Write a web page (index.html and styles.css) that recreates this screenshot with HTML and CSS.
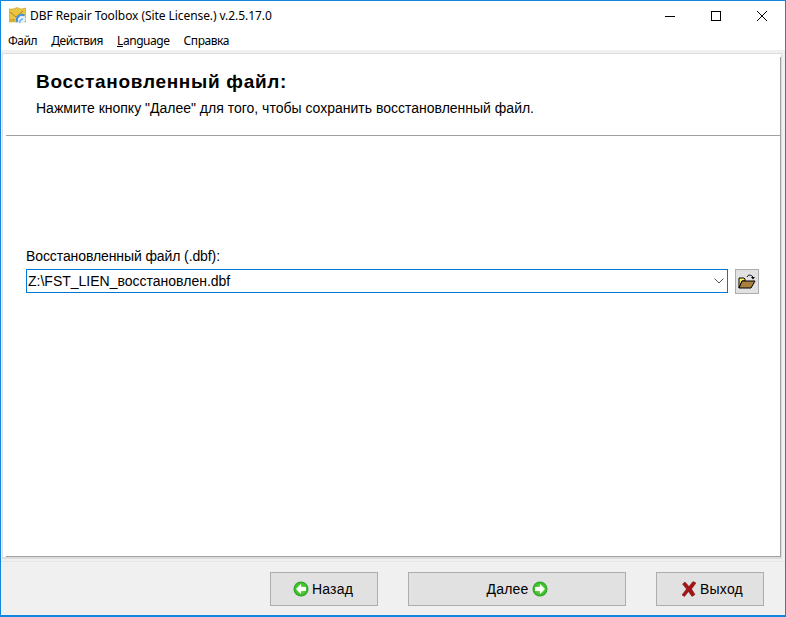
FILE: index.html
```html
<!DOCTYPE html>
<html lang="ru">
<head>
  <meta charset="UTF-8">
  <meta name="viewport" content="width=device-width, initial-scale=1.0">
  <title>DBF Repair Toolbox</title>
  <link rel="stylesheet" href="styles.css">
</head>
<body>
  <div class="window">
    <div class="titlebar">
      <svg class="app-icon" width="17" height="17" viewBox="0 0 17 17">
        <path d="M0 2 L4 2 L8 0.5 L12 2 L17 1 V15 H0 Z" fill="#eac63f" stroke="#b8902a" stroke-width="0.5"/>
        <path d="M1 5 L7 10 L14 4" fill="none" stroke="#a8842c" stroke-width="1"/>
        <path d="M1 13 H6" stroke="#b8902a" stroke-width="1"/>
        <circle cx="12" cy="12" r="4.5" fill="#e6f2fd"/>
        <path d="M8.5 15 A5 5 0 0 1 15.5 8.5" fill="none" stroke="#3c8ee8" stroke-width="2"/>
        <path d="M11 16 A3 3 0 0 1 14 12" fill="none" stroke="#6ab0f0" stroke-width="1.5"/>
      </svg>
      <span class="app-title">DBF Repair Toolbox (Site License.) v.2.5.17.0</span>
      <div class="window-controls">
        <svg class="ctl" width="46" height="29" viewBox="0 0 46 29"><path d="M18 15.5 H28" stroke="#000" stroke-width="1"/></svg>
        <svg class="ctl" width="46" height="29" viewBox="0 0 46 29"><rect x="18.5" y="10.5" width="9" height="9" fill="none" stroke="#000" stroke-width="1"/></svg>
        <svg class="ctl" width="46" height="29" viewBox="0 0 46 29"><path d="M18 10 L28 20 M28 10 L18 20" stroke="#000" stroke-width="1"/></svg>
      </div>
    </div>

    <div class="menubar">
      <span class="menu-item">Файл</span>
      <span class="menu-item">Действия</span>
      <span class="menu-item"><u>L</u>anguage</span>
      <span class="menu-item">Справка</span>
    </div>

    <div class="panel">
      <div class="panel-inner">
        <div class="panel-header">
          <h1>Восстановленный файл:</h1>
          <p>Нажмите кнопку "Далее" для того, чтобы сохранить восстановленный файл.</p>
        </div>
        <div class="panel-body">
          <label class="field-label">Восстановленный файл (.dbf):</label>
          <div class="field-row">
            <div class="combo">
              <span class="combo-value">Z:\FST_LIEN_восстановлен.dbf</span>
              <svg width="10" height="6" viewBox="0 0 10 6"><path d="M0.5 0.5 L5 5 L9.5 0.5" fill="none" stroke="#5a4a6a" stroke-width="1"/></svg>
            </div>
            <button type="button" class="browse-btn">
              <svg width="18" height="16" viewBox="0 0 18 16">
                <path d="M1 4 H6 L7 5 V7 H4 L1 14 Z" fill="#fff25a" stroke="#000" stroke-width="1"/>
                <path d="M1 14 L4 7 H17 L13 14 Z" fill="#a8803c" stroke="#000" stroke-width="1"/>
                <path d="M9 3 C10 0.5 13 0.5 15 3" fill="none" stroke="#000" stroke-width="1"/>
                <path d="M13 3 H17 L15 5.5 Z" fill="#000"/>
              </svg>
            </button>
          </div>
        </div>
      </div>
    </div>

    <div class="footer">
      <button type="button" class="btn btn-back">
        <svg width="16" height="16" viewBox="0 0 16 16">
          <defs>
            <radialGradient id="green" cx="0.5" cy="0.5" r="0.55">
              <stop offset="0" stop-color="#8ce85a"/>
              <stop offset="0.7" stop-color="#3cc02c"/>
              <stop offset="1" stop-color="#1c8a1c"/>
            </radialGradient>
          </defs>
          <circle cx="8" cy="8" r="7.5" fill="url(#green)"/>
          <path d="M8 3 L3 8 L8 13 V10 H13 V6 H8 Z" fill="#fff"/>
        </svg>
        Назад
      </button>
      <button type="button" class="btn btn-next">
        Далее
        <svg width="16" height="16" viewBox="0 0 16 16">
          <circle cx="8" cy="8" r="7.5" fill="url(#green)"/>
          <path d="M8 3 L13 8 L8 13 V10 H3 V6 H8 Z" fill="#fff"/>
        </svg>
      </button>
      <button type="button" class="btn btn-exit">
        <svg width="16" height="16" viewBox="0 0 16 16">
          <path d="M1.5 3 L4 1 L8 5.5 L12 0.5 L15 2 L10.5 8 L14 13.5 L11 15.5 L7.5 10.5 L3.5 15.5 L1 14 L5.5 8 Z" fill="#a51414" stroke="#6e1010" stroke-width="0.5"/>
        </svg>
        Выход
      </button>
    </div>
  </div>
</body>
</html>
```

FILE: styles.css
```css
* {
  margin: 0;
  padding: 0;
  box-sizing: border-box;
}

body {
  font-family: "Liberation Sans", Arial, sans-serif;
  font-size: 14px;
  color: #000;
  background-color: #f0f0f0;
}

.window {
  display: flex;
  flex-direction: column;
  width: 786px;
  height: 617px;
  background-color: #f0f0f0;
  border: 1px solid #0f86e0;
  border-bottom-width: 2px;
}

.titlebar {
  display: flex;
  align-items: center;
  height: 29px;
  background-color: #fff;
  padding-left: 8px;
}

.app-icon {
  margin-right: 4px;
}

.app-title {
  font-family: "Noto Sans", sans-serif;
  font-size: 12px;
  letter-spacing: -0.07px;
}

.window-controls {
  display: flex;
  margin-left: auto;
}

.menubar {
  display: flex;
  align-items: center;
  height: 20px;
  background-color: #fff;
  font-family: "Noto Sans", sans-serif;
  font-size: 12px;
  letter-spacing: -0.45px;
  gap: 14px;
  padding-left: 7px;
}

.panel {
  display: flex;
  flex-direction: column;
  height: 506px;
  margin: 3px 3px 0 1px;
  background-color: #fff;
  border: 1px solid #dcdcdc;
  border-bottom-width: 2px;
}

.panel-inner {
  flex: 1;
  display: flex;
  flex-direction: column;
  margin: 3px 0 0 3px;
  border-right: 1px solid #a0a0a0;
  border-bottom: 1px solid #a0a0a0;
}

.panel-header {
  height: 79px;
  margin-right: -1px;
  border-bottom: 1px solid #a0a0a0;
  padding: 14px 0 0 30px;
}

.panel-header h1 {
  font-size: 19px;
  letter-spacing: 0.7px;
  margin-bottom: 7px;
}

.panel-body {
  flex: 1;
  padding: 112px 20px 0 20px;
}

.field-label {
  display: block;
  letter-spacing: -0.1px;
  margin-bottom: 5px;
}

.field-row {
  display: flex;
  gap: 7px;
}

.combo {
  display: flex;
  align-items: center;
  justify-content: space-between;
  width: 702px;
  height: 24px;
  border: 1px solid #0078d7;
  padding: 0 3px 0 1px;
}

.browse-btn {
  display: flex;
  align-items: center;
  justify-content: center;
  width: 24px;
  height: 25px;
  background-color: #e1e1e1;
  border: 1px solid #adadad;
}

.footer {
  flex: 1;
  display: flex;
  align-items: flex-start;
  margin-top: 2px;
  padding: 10px 0 0 269px;
  border-top: 1px solid #e4e4e4;
}

.btn {
  display: flex;
  align-items: center;
  justify-content: center;
  gap: 3px;
  height: 34px;
  background-color: #e1e1e1;
  border: 1px solid #adadad;
  font-family: "Liberation Sans", Arial, sans-serif;
  font-size: 14px;
  letter-spacing: 0.2px;
}

.btn-back,
.btn-exit {
  width: 108px;
}

.btn-back {
  padding-right: 2px;
}

.btn-exit {
  padding-left: 4px;
}

.btn-next {
  width: 218px;
  margin: 0 30px;
}
```
